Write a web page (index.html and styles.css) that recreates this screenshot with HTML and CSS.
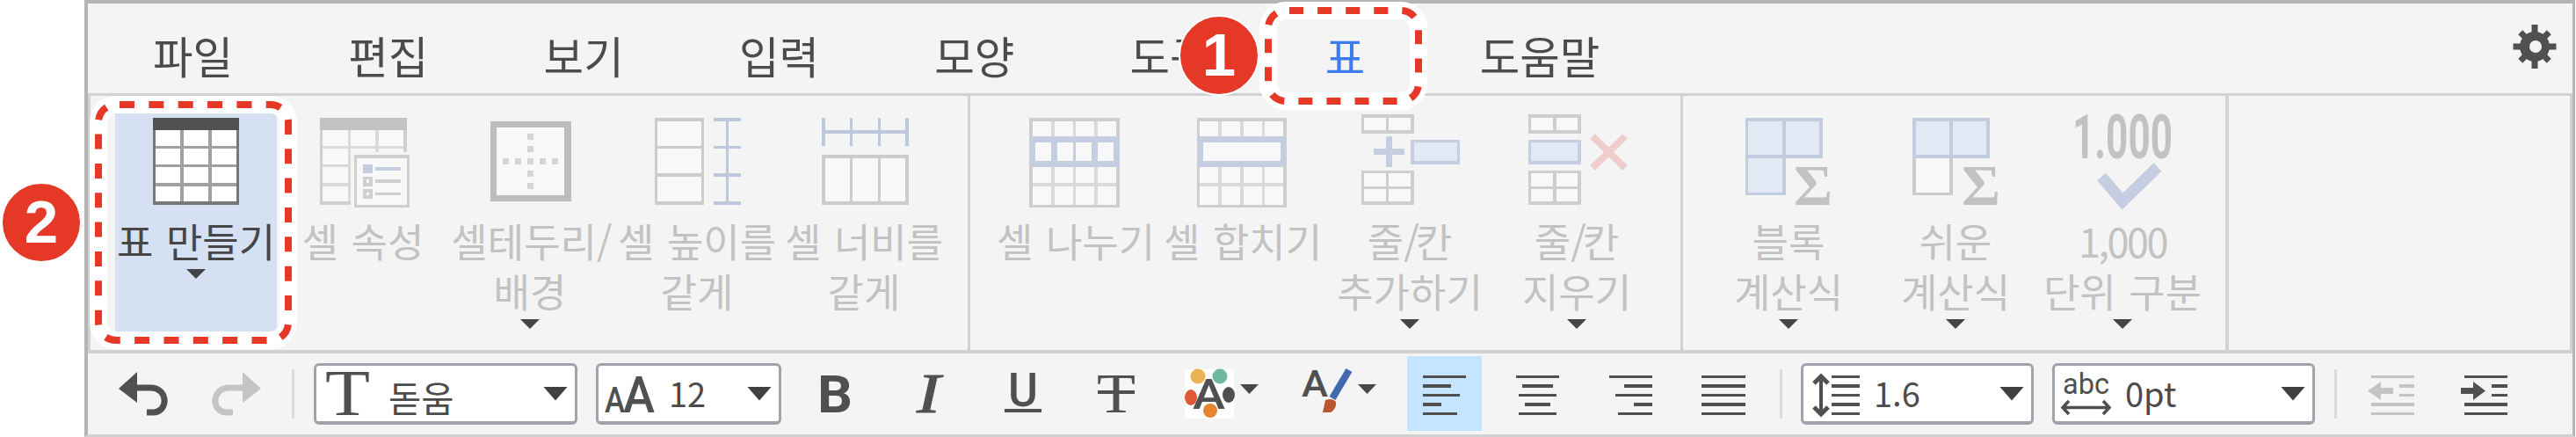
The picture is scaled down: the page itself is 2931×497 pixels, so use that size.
FILE: index.html
```html
<!DOCTYPE html>
<html lang="ko">
<head>
<meta charset="utf-8">
<title>표</title>
<link rel="stylesheet" href="styles.css">
</head>
<body>
<div class="window">
  <nav class="menu">
    <span class="menu-item">파일</span>
    <span class="menu-item">편집</span>
    <span class="menu-item">보기</span>
    <span class="menu-item">입력</span>
    <span class="menu-item">모양</span>
    <span class="menu-item">도구</span>
    <span class="menu-item active">표</span>
    <span class="menu-item">도움말</span>
    <svg class="gear" viewBox="2859 28 50 50">
      <g fill="#505050">
        <circle cx="2884" cy="53" r="17"/>
        <path d="M2880.500 28h7v50h-7zM2859.500 49.500h49v7h-49z"/>
        <path d="M2880.500 30h7v46h-7z" transform="rotate(45 2884 53)"/>
        <path d="M2880.500 30h7v46h-7z" transform="rotate(-45 2884 53)"/>
      </g>
      <circle cx="2885" cy="53" r="7" fill="#f4f4f4"/>
    </svg>
  </nav>

  <div class="ribbon">
    <div class="group g1">
      <div class="tool on">
        <svg class="icon" viewBox="128 128 190 110">
          <path fill="#fff" d="M174 134h98v99h-98z"/>
          <path fill="#a0a0a0" d="M205 148h4v81h-4zM237 148h4v81h-4zM177 166h92v3h-92zM177 187h92v3h-92zM177 208h92v4h-92z"/>
          <path fill="#787878" d="M174 148h3v85h-3zM269 148h3v85h-3zM174 229h98v4h-98z"/>
          <path fill="#505050" d="M174 134h98v14h-98z"/>
        </svg>
        <span class="label">표 만들기</span>
        <i class="drop"></i>
      </div>
      <div class="tool">
        <svg class="icon" viewBox="318 128 190 110">
          <path fill="#f8f8f8" d="M364 134h99v39h-64v60h-35z"/>
          <path fill="#dadada" d="M396 148h3v85h-3zM427 148h4v25h-4zM367 166h92v3h-92zM367 187h30v3h-30zM367 208h30v4h-30z"/>
          <path fill="#cfcfcf" d="M364 148h3v85h-3zM459 148h4v25h-4zM364 229h35v4h-35z"/>
          <path fill="#c2c2c2" d="M364 134h99v14h-99z"/>
          <path fill="#cfcfcf" d="M403 176h63v60h-63z"/><path fill="#f8f8f8" d="M406 180h57v53h-57z"/>
          <path fill="#c5cee0" d="M413 187h11v10h-11zM427 190h29v4h-29z"/>
          <path fill="#cfcfcf" d="M413 201h11v11h-11zM413 215h11v11h-11zM427 204h29v4h-29zM427 219h29v3h-29z"/>
          <path fill="#f8f8f8" d="M417 204h3v4h-3zM417 219h3v3h-3z"/>
        </svg>
        <span class="label">셀 속성</span>
      </div>
      <div class="tool">
        <svg class="icon" viewBox="508 128 190 110">
          <path fill="#bdbdbd" d="M558 138h92v91h-92z"/><path fill="#f8f8f8" d="M565 145h77v77h-77z"/>
          <path fill="#d5d5d5" d="M572 180h7v7h-7zM586 180h7v7h-7zM600 180h7v7h-7zM614 180h7v7h-7zM628 180h7v7h-7zM600 152h7v7h-7zM600 166h7v7h-7zM600 194h7v7h-7zM600 208h7v7h-7z"/>
        </svg>
        <span class="label">셀테두리<span class="slash">/</span><br>배경</span>
        <i class="drop"></i>
      </div>
      <div class="tool">
        <svg class="icon" viewBox="698 128 190 110">
          <path fill="#cbcbcb" d="M745 134h56v99h-56z"/><path fill="#f8f8f8" d="M748 138h50v28h-50zM748 169h50v28h-50zM748 201h50v28h-50z"/>
          <path fill="#bec8dd" d="M812 134h31v4h-31zM812 166h31v3h-31zM812 197h31v4h-31zM812 229h31v4h-31zM826 134h3v98h-3z"/>
        </svg>
        <span class="label">셀 높이를<br>같게</span>
      </div>
      <div class="tool">
        <svg class="icon" viewBox="888 128 190 110">
          <path fill="#bec8dd" d="M935 134h4v32h-4zM967 134h3v32h-3zM999 134h3v32h-3zM1030 134h4v32h-4zM935 148h98v4h-98z"/>
          <path fill="#cbcbcb" d="M935 176h99v57h-99z"/><path fill="#f8f8f8" d="M939 180h28v49h-28zM970 180h29v49h-29zM1002 180h28v49h-28z"/>
        </svg>
        <span class="label">셀 너비를<br>같게</span>
      </div>
    </div>

    <div class="group g2">
      <div class="tool">
        <svg class="icon" viewBox="1129 128 190 110">
          <path fill="#f8f8f8" d="M1171 134h103v102h-103z"/>
          <path fill="#dadada" d="M1196 138h4v95h-4zM1221 138h3v95h-3zM1245 138h4v95h-4zM1175 208h95v4h-95z"/>
          <path fill="#cecece" fill-rule="evenodd" d="M1171 134h103v102h-103zM1175 138v95h95v-95z"/>
          <path fill="#c5cee0" d="M1171 155h103v35h-103z"/>
          <path fill="#f8f8f8" d="M1178 162h18v21h-18zM1203 162h18v21h-18zM1224 162h18v21h-18zM1249 162h18v21h-18z"/>
        </svg>
        <span class="label">셀 나누기</span>
      </div>
      <div class="tool">
        <svg class="icon" viewBox="1319 128 190 110">
          <path fill="#f8f8f8" d="M1362 134h102v102h-102z"/>
          <path fill="#dadada" d="M1386 138h4v95h-4zM1411 138h4v95h-4zM1436 138h3v95h-3zM1365 208h95v4h-95z"/>
          <path fill="#cecece" fill-rule="evenodd" d="M1362 134h102v102h-102zM1365 138v95h95v-95z"/>
          <path fill="#c5cee0" d="M1362 155h102v35h-102z"/><path fill="#f8f8f8" d="M1369 162h88v21h-88z"/>
        </svg>
        <span class="label">셀 합치기</span>
      </div>
      <div class="tool">
        <svg class="icon" viewBox="1509 128 190 110">
          <path fill="#cecece" d="M1549 130h60v22h-60zM1549 194h60v39h-60z"/>
          <path fill="#f8f8f8" d="M1552 134h25v14h-25zM1580 134h25v14h-25zM1552 197h25v15h-25zM1580 197h25v15h-25zM1552 215h25v14h-25zM1580 215h25v14h-25z"/>
          <path fill="#c5cee0" d="M1563 169h35v7h-35zM1577 155h7v35h-7zM1605 159h56v28h-56z"/>
          <path fill="#e2e9f4" d="M1609 162h49v21h-49z"/>
        </svg>
        <span class="label">줄<span class="slash">/</span>칸<br>추가하기</span>
        <i class="drop"></i>
      </div>
      <div class="tool">
        <svg class="icon" viewBox="1699 128 190 110">
          <path fill="#cecece" d="M1739 130h60v22h-60zM1739 194h60v39h-60z"/>
          <path fill="#f8f8f8" d="M1742 134h25v14h-25zM1771 134h24v14h-24zM1742 197h25v15h-25zM1771 197h24v15h-24zM1742 215h25v14h-25zM1771 215h24v14h-24z"/>
          <path fill="#c5cee0" d="M1739 159h60v28h-60z"/><path fill="#e2e9f4" d="M1742 162h53v21h-53z"/>
          <path class="smooth" d="M1812 155l37 36M1849 155l-37 36" stroke="#efcdcd" stroke-width="8"/>
        </svg>
        <span class="label">줄<span class="slash">/</span>칸<br>지우기</span>
        <i class="drop"></i>
      </div>
    </div>

    <div class="group g3">
      <div class="tool">
        <svg class="icon" viewBox="1940 128 190 110">
          <path fill="#c2ccdf" d="M1986 134h88v46h-42v42h-46z"/>
          <path fill="#e2e8f4" d="M1989 138h39v38h-39zM2032 138h38v38h-38zM1989 180h39v39h-39z"/>
          <text class="sigma" x="2041" y="233" textLength="44" lengthAdjust="spacingAndGlyphs">Σ</text>
        </svg>
        <span class="label">블록<br>계산식</span>
        <i class="drop"></i>
      </div>
      <div class="tool">
        <svg class="icon" viewBox="2130 128 190 110">
          <path fill="#cbcbcb" d="M2176 176h46v46h-46z"/><path fill="#f8f8f8" d="M2180 180h38v39h-38z"/>
          <path fill="#c2ccdf" d="M2176 134h88v46h-88z"/>
          <path fill="#e2e8f4" d="M2180 138h38v38h-38zM2222 138h38v38h-38z"/>
          <text class="sigma" x="2232" y="233" textLength="44" lengthAdjust="spacingAndGlyphs">Σ</text>
        </svg>
        <span class="label">쉬운<br>계산식</span>
        <i class="drop"></i>
      </div>
      <div class="tool">
        <svg class="icon" viewBox="2320 128 190 110">
          <text class="thousand" x="2358" y="180" textLength="114" lengthAdjust="spacingAndGlyphs">1.000</text>
          <path class="smooth" d="M2391 201L2415 229L2455 190" fill="none" stroke="#c5cee0" stroke-width="13"/>
        </svg>
        <span class="label"><span class="num">1,000</span><br>단위 구분</span>
        <i class="drop"></i>
      </div>
    </div>
  </div>

  <div class="bar">
    <svg class="w116" viewBox="100 402 116 92">
      <path d="M135 442L156 423V458z" fill="#505050"/>
      <path d="M152 441H171C192 441 192 469 174 469H167" fill="none" stroke="#505050" stroke-width="7"/>
    </svg>
    <svg class="w116" viewBox="216 402 116 92">
      <path d="M297 442L276 423V458z" fill="#c4c4c4"/>
      <path d="M280 441H261C240 441 240 469 258 469H265" fill="none" stroke="#c4c4c4" stroke-width="7"/>
    </svg>
    <span class="sep"></span>
    <div class="combo c-font">
      <svg class="w80" viewBox="360 416 80 63"><text class="serif" x="370" y="472" font-size="74" textLength="51" lengthAdjust="spacingAndGlyphs">T</text></svg>
      <span class="value">돋움</span><i class="caret"></i>
    </div>
    <div class="combo c-size">
      <svg class="w80" viewBox="681 416 80 63">
        <text class="sans medium" x="688" y="469" font-size="40" textLength="23" lengthAdjust="spacingAndGlyphs">A</text>
        <text class="sans medium" x="709" y="469" font-size="58" textLength="36" lengthAdjust="spacingAndGlyphs">A</text>
      </svg>
      <span class="value">12</span><i class="caret"></i>
    </div>
    <svg class="w111" viewBox="889 402 111 92"><text class="sans" x="930" y="469" font-size="59" textLength="40" lengthAdjust="spacingAndGlyphs">B</text></svg>
    <svg class="w110" viewBox="1000 402 110 92"><text class="serif slant" x="1043" y="469" font-size="63" textLength="27" lengthAdjust="spacingAndGlyphs">I</text></svg>
    <svg class="w107" viewBox="1110 402 107 92"><text class="sans medium" x="1147" y="462" font-size="54" textLength="34" lengthAdjust="spacingAndGlyphs">U</text><path fill="#505050" d="M1143 465h42v4h-42z"/></svg>
    <svg class="w103" viewBox="1217 402 103 92"><text class="serif" x="1248" y="469" font-size="63" textLength="44" lengthAdjust="spacingAndGlyphs">T</text><path fill="#505050" d="M1249 444h42v4h-42z"/></svg>
    <svg class="w130" viewBox="1320 402 130 92">
      <path fill="#fff" d="M1348 420h56v56h-56z"/>
      <circle cx="1363" cy="428" r="8.500" fill="#ecb256"/><circle cx="1388" cy="428" r="8.500" fill="#6eb8a0"/>
      <ellipse cx="1355" cy="452" rx="7" ry="9" fill="#df5a36"/><ellipse cx="1398" cy="449" rx="7" ry="9" fill="#505050"/>
      <circle cx="1377" cy="467" r="8" fill="#e48532"/>
      <text class="sans medium" x="1357" y="465" font-size="49" textLength="37" lengthAdjust="spacingAndGlyphs">A</text>
      <path d="M1411 437h21l-10.500 11z" fill="#484848"/>
    </svg>
    <svg class="w151" viewBox="1450 402 151 92">
      <text class="sans medium" x="1481" y="451" font-size="43" textLength="30" lengthAdjust="spacingAndGlyphs">A</text>
      <path d="M1535 421L1516 453" stroke="#4169ad" stroke-width="8"/>
      <path d="M1508 455q8-3 12 2q1 8-6 12h-9z" fill="#bc5630"/>
      <path d="M1545 437h21l-10.500 11z" fill="#484848"/>
    </svg>
    <svg class="w85 picked" viewBox="1601 402 85 92"><path fill="#505050" d="M1619 427h49v3h-49zM1619 437h32v4h-32zM1619 448h42v3h-42zM1619 458h21v4h-21zM1619 469h39v3h-39z"/></svg>
    <svg class="w127" viewBox="1686 402 127 92"><path fill="#505050" d="M1725 427h49v3h-49zM1732 437h35v4h-35zM1728 448h43v3h-43zM1735 458h29v4h-29zM1728 469h43v3h-43z"/></svg>
    <svg class="w85" viewBox="1813 402 85 92"><path fill="#505050" d="M1831 427h49v3h-49zM1848 437h32v4h-32zM1838 448h42v3h-42zM1859 458h21v4h-21zM1841 469h39v3h-39z"/></svg>
    <svg class="w127" viewBox="1898 402 127 92"><path fill="#505050" d="M1936 427h50v3h-50zM1936 437h50v4h-50zM1936 448h50v3h-50zM1936 458h50v4h-50zM1936 469h50v3h-50z"/></svg>
    <span class="sep"></span>
    <div class="combo c-line">
      <svg class="w80" viewBox="2052 416 80 63">
        <path fill="#505050" d="M2084 427h32v3h-32zM2084 437h32v4h-32zM2084 448h32v3h-32zM2084 458h32v4h-32zM2084 469h32v3h-32zM2070 430h4v40h-4z"/>
        <path d="M2064 436L2072 428L2080 436M2064 463L2072 471L2080 463" fill="none" stroke="#505050" stroke-width="5"/>
      </svg>
      <span class="value">1.6</span><i class="caret"></i>
    </div>
    <div class="combo c-gap">
      <svg class="w80" viewBox="2338 416 80 63">
        <text class="abc" x="2347" y="448" font-size="34" textLength="53" lengthAdjust="spacingAndGlyphs">abc</text>
        <path d="M2348 463.500H2400M2354 456L2347 463.500L2354 471M2393 456L2400 463.500L2393 471" fill="none" stroke="#505050" stroke-width="3.500"/>
      </svg>
      <span class="value">0pt</span><i class="caret"></i>
    </div>
    <span class="sep"></span>
    <svg class="w116" viewBox="2659 402 116 92"><path fill="#c4c4c4" d="M2698 427h49v3h-49zM2730 437h17v4h-17zM2730 448h17v3h-17zM2698 458h49v4h-49zM2698 469h49v3h-49z"/><path fill="#c4c4c4" d="M2694 444.500L2709 434V441H2723V448H2709V455z"/></svg>
    <svg class="w116" viewBox="2775 402 116 92"><path fill="#505050" d="M2804 427h49v3h-49zM2835 437h18v4h-18zM2835 448h18v3h-18zM2804 458h49v4h-49zM2804 469h49v3h-49z"/><path fill="#505050" d="M2828 444.500L2814 434V441H2800V448H2814V455z"/></svg>
  </div>
</div>

<svg class="marks" viewBox="0 0 2931 497">
  <g fill="none">
    <rect x="1443" y="12" width="171" height="103" rx="20" stroke="#fff" stroke-width="20"/>
    <path d="M1467 12H1594a20 20 0 0 1 20 20V95a20 20 0 0 1 -20 20H1463a20 20 0 0 1 -20 -20V32a20 20 0 0 1 20 -20z" stroke="#e63827" stroke-width="8" stroke-dasharray="16 16.100"/>
    <rect x="112" y="119" width="216" height="268" rx="20" stroke="#fff" stroke-width="20"/>
    <path d="M136 119H308a20 20 0 0 1 20 20V367a20 20 0 0 1 -20 20H132a20 20 0 0 1 -20 -20V139a20 20 0 0 1 20 -20z" stroke="#e63827" stroke-width="8" stroke-dasharray="17 16.350"/>
  </g>
</svg>
<div class="badge one">1</div>
<div class="badge two">2</div>
</body>
</html>
```

FILE: styles.css
```css
* { box-sizing: border-box; }
body {
  margin: 0;
  width: 2931px;
  height: 497px;
  overflow: hidden;
  position: relative;
  background: #fff;
  font-family: "Noto Sans CJK KR", "Noto Sans", sans-serif;
  color: #4b4b4b;
}
svg { display: block; flex: none; }

.window {
  margin-left: 96px;
  width: 2834px;
  height: 497px;
  border: 4px solid #b4b4b4;
  border-right-width: 3px;
  border-bottom: 3px solid #d1d1d1;
  background: #f4f4f4;
  display: flex;
  flex-direction: column;
}

/* menu row */
.menu {
  height: 102px;
  flex: none;
  display: flex;
  padding-left: 74px;
}
.menu-item {
  width: 222.300px;
  font-size: 49.500px;
  font-weight: 400;
  line-height: 118px;
  height: 102px;
  white-space: nowrap;
}
.menu-item.active { width: 176px; color: #3b7df0; }
.gear {
  width: 50px;
  height: 50px;
  margin: 24px 18px 0 auto;
}

/* ribbon */
.ribbon {
  height: 296px;
  flex: none;
  display: flex;
  border: 3px solid #d1d1d1;
  border-bottom-width: 4px;
}
.group {
  display: flex;
  padding-top: 19px;
  border-right: 3px solid #d3d3d3;
}
.g1 { width: 1001px; padding-left: 25px; }
.g2 { width: 811px; padding-left: 25px; }
.g3 { width: 621px; padding-left: 25px; border-right-width: 4px; }
.tool {
  width: 190px;
  height: 249px;
  flex: none;
  display: flex;
  flex-direction: column;
  align-items: center;
  color: #c2c2c2;
}
.tool.on {
  color: #464646;
  background: linear-gradient(#d5e0f2, #d5e0f2) 3px 0 / 184px 249px no-repeat;
}
.icon {
  width: 190px;
  height: 110px;
  shape-rendering: crispEdges;
}
.smooth { shape-rendering: auto; }
.label {
  margin-top: 7px;
  font-size: 45px;
  font-weight: 400;
  line-height: 57px;
  text-align: center;
  white-space: nowrap;
  word-spacing: 2px;
}
.num { letter-spacing: -2.500px; }
.slash { letter-spacing: -4px; }
.drop {
  width: 22px;
  height: 11px;
  margin-top: 4px;
  background: #444;
  clip-path: polygon(0 0, 100% 0, 50% 100%);
}
.sigma {
  font: bold 65px "Liberation Serif", serif;
  fill: #c2c2c2;
}
.thousand {
  font: bold 70px Roboto, sans-serif;
  fill: #c2c2c2;
}

/* formatting bar */
.bar {
  height: 92px;
  flex: none;
  display: flex;
  align-items: center;
}
.bar > svg { height: 92px; }
.w80 { width: 80px; height: 63px; }
.w85 { width: 85px; }
.w103 { width: 103px; }
.w107 { width: 107px; }
.w110 { width: 110px; }
.w111 { width: 111px; }
.w116 { width: 116px; }
.w127 { width: 127px; }
.w130 { width: 130px; }
.w151 { width: 151px; }
.picked { background: linear-gradient(#c5e4ff, #c5e4ff) 0 3px / 85px 85px no-repeat; }
.sep {
  width: 3px;
  height: 56px;
  flex: none;
  background: #d9d9d9;
}
.combo {
  height: 70px;
  flex: none;
  display: flex;
  align-items: center;
  border: 3px solid #a0a3ad;
  border-bottom-width: 4px;
  border-radius: 6px;
  background: #fff;
}
.c-font { width: 300px; margin: 0 21px 0 22px; }
.c-size { width: 211px; }
.c-line { width: 265px; margin: 0 21px; }
.c-gap { width: 299px; margin-right: 22px; }
.value {
  flex: 1;
  height: 63px;
  font-size: 38px;
  font-weight: 400;
  line-height: 61px;
}
.c-font .value { font-size: 40.500px; line-height: 72px; padding-left: 2px; }
.caret {
  width: 28px;
  height: 16px;
  margin-right: 8px;
  background: #404040;
  clip-path: polygon(0 0, 100% 0, 50% 100%);
}
.serif { font-family: "Liberation Serif", serif; fill: #505050; }
.slant { font-style: italic; stroke: #505050; stroke-width: 1px; }
.sans { font-family: Roboto, sans-serif; font-weight: bold; fill: #505050; }
.sans.medium { font-weight: 500; }
.abc { font-family: Roboto, sans-serif; font-weight: 400; fill: #505050; }

/* step callouts */
.marks {
  position: absolute;
  left: 0;
  top: 0;
  width: 2931px;
  height: 497px;
}
.badge {
  position: absolute;
  width: 92px;
  height: 92px;
  border: 2px solid #fff;
  border-radius: 50%;
  background: #e63827;
  color: #fff;
  font: bold 69px/88px "Liberation Sans", sans-serif;
  text-align: center;
}
.one { left: 1341px; top: 17px; }
.two { left: 1px; top: 207px; }
```
